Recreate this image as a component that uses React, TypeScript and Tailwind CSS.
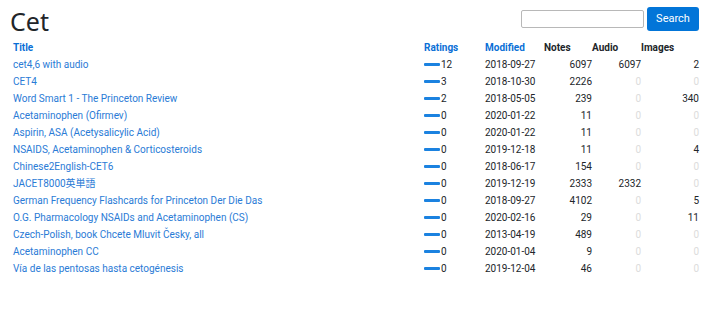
import React from 'react';

type Row = {
  title: string;
  ratings: number;
  modified: string;
  notes: number;
  audio: number;
  images: number;
};

const rows: Row[] = [
  { title: 'cet4,6 with audio', ratings: 12, modified: '2018-09-27', notes: 6097, audio: 6097, images: 2 },
  { title: 'CET4', ratings: 3, modified: '2018-10-30', notes: 2226, audio: 0, images: 0 },
  { title: 'Word Smart 1 - The Princeton Review', ratings: 2, modified: '2018-05-05', notes: 239, audio: 0, images: 340 },
  { title: 'Acetaminophen (Ofirmev)', ratings: 0, modified: '2020-01-22', notes: 11, audio: 0, images: 0 },
  { title: 'Aspirin, ASA (Acetysalicylic Acid)', ratings: 0, modified: '2020-01-22', notes: 11, audio: 0, images: 0 },
  { title: 'NSAIDS, Acetaminophen & Corticosteroids', ratings: 0, modified: '2019-12-18', notes: 11, audio: 0, images: 4 },
  { title: 'Chinese2English-CET6', ratings: 0, modified: '2018-06-17', notes: 154, audio: 0, images: 0 },
  { title: 'JACET8000英単語', ratings: 0, modified: '2019-12-19', notes: 2333, audio: 2332, images: 0 },
  { title: 'German Frequency Flashcards for Princeton Der Die Das', ratings: 0, modified: '2018-09-27', notes: 4102, audio: 0, images: 5 },
  { title: 'O.G. Pharmacology NSAIDs and Acetaminophen (CS)', ratings: 0, modified: '2020-02-16', notes: 29, audio: 0, images: 11 },
  { title: 'Czech-Polish, book Chcete Mluvit Česky, all', ratings: 0, modified: '2013-04-19', notes: 489, audio: 0, images: 0 },
  { title: 'Acetaminophen CC', ratings: 0, modified: '2020-01-04', notes: 9, audio: 0, images: 0 },
  { title: 'Vía de las pentosas hasta cetogénesis', ratings: 0, modified: '2019-12-04', notes: 46, audio: 0, images: 0 },
];

function Count({ value }: { value: number }) {
  return <span className={value === 0 ? 'text-[#dcdcdc]' : 'text-[#212529]'}>{value}</span>;
}

export default function App() {
  return (
    <div
      className="w-[720px] h-[315px] bg-white text-[#212529] overflow-hidden"
      style={{ fontFamily: 'Roboto, "Noto Sans CJK JP", sans-serif' }}
    >
      {/* header */}
      <div className="flex items-start justify-between pl-[10px] pr-[21px] pt-[4px]">
        <h1
          className="text-[25px] leading-[34px] font-normal"
          style={{ fontFamily: '"Noto Sans", sans-serif' }}
        >
          Cet
        </h1>
        <form className="flex items-center gap-[3px] mt-[3px]" onSubmit={(e) => e.preventDefault()}>
          <input
            type="text"
            className="w-[123px] h-[18px] border border-[#b8b8b8] rounded-[2px] px-1 text-[11px]"
          />
          <button
            type="submit"
            className="h-[24px] w-[52px] bg-[#0275d8] text-white text-[11px] rounded-[3px]"
          >
            Search
          </button>
        </form>
      </div>

      {/* decks */}
      <table className="ml-[13px] mt-[1px] w-[686px] table-fixed border-collapse text-[10px]">
        <colgroup>
          <col className="w-[411px]" />
          <col className="w-[61px]" />
          <col className="w-[59px]" />
          <col className="w-[48px]" />
          <col className="w-[49px]" />
          <col className="w-[58px]" />
        </colgroup>
        <thead>
          <tr className="h-[17px] text-left font-bold">
            <th className="text-[#0a6fd6] p-0">Title</th>
            <th className="text-[#0a6fd6] p-0">Ratings</th>
            <th className="text-[#0a6fd6] p-0">Modified</th>
            <th className="p-0">Notes</th>
            <th className="p-0">Audio</th>
            <th className="p-0">Images</th>
          </tr>
        </thead>
        <tbody>
          {rows.map((r) => (
            <tr key={r.title} className="h-[17px]">
              <td className="p-0 text-[#2a7bd6] whitespace-nowrap">{r.title}</td>
              <td className="p-0">
                <span className="flex items-center">
                  <span className="inline-block w-[16px] h-[3px] bg-[#1b82e0] rounded-[1px]" />
                  <span className="ml-[1px]">{r.ratings}</span>
                </span>
              </td>
              <td className="p-0">{r.modified}</td>
              <td className="p-0 text-right">{r.notes}</td>
              <td className="p-0 text-right"><Count value={r.audio} /></td>
              <td className="p-0 text-right"><Count value={r.images} /></td>
            </tr>
          ))}
        </tbody>
      </table>
    </div>
  );
}
